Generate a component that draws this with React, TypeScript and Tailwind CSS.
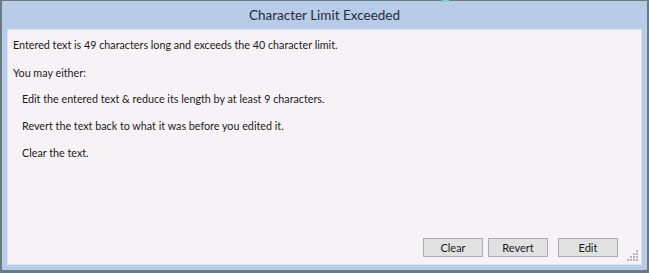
import React from 'react';

const font = { fontFamily: 'Lato, "Noto Sans", sans-serif' };

function ResizeGrip() {
  const dots: [number, number][] = [];
  for (let r = 0; r < 4; r++) {
    for (let c = 0; c < 4; c++) {
      if (r + c >= 3) dots.push([c * 3, r * 3]);
    }
  }
  return (
    <svg width="12" height="12" viewBox="0 0 12 12" className="absolute right-[2px] bottom-[2px]">
      {dots.map(([x, y], i) => (
        <rect key={i} x={x} y={y} width="2" height="2" fill="#b5b5b5" />
      ))}
    </svg>
  );
}

function Button({ label }: { label: string }) {
  return (
    <button className="h-[19px] w-[60px] border border-[#adadad] bg-[#e1e1e1] text-[11px] leading-none text-[#1b1b1b]">
      {label}
    </button>
  );
}

export default function App() {
  return (
    <div
      className="relative flex h-[273px] w-[649px] flex-col border-t border-l-2 border-r-2 border-b-[3px] border-[#6d7885] bg-[#b8cce8]"
      style={font}
    >
      <div className="absolute -top-px left-[440px] h-[2px] w-[7px] bg-[#7fd0dc]" />
      <div className="flex h-[28px] items-center justify-center text-[13.5px] text-[#1f2d3d]">
        Character Limit Exceeded
      </div>
      <div className="relative mx-[5px] mb-[5px] flex flex-1 flex-col border border-[#d9e2ee] bg-[#f7f2f6] px-[5px] pt-[7px] pb-[7px] text-[10.75px] leading-[15px] text-[#1a1a1a]">
        <p>Entered text is 49 characters long and exceeds the 40 character limit.</p>
        <p className="mt-[13px]">You may either:</p>
        <div className="flex flex-col gap-[12px] pl-[9px] pt-[11px]">
          <p>Edit the entered text &amp; reduce its length by at least 9 characters.</p>
          <p>Revert the text back to what it was before you edited it.</p>
          <p>Clear the text.</p>
        </div>
        <div className="flex-1" />
        <div className="flex justify-end pr-[18px]">
          <Button label="Clear" />
          <div className="w-[5px]" />
          <Button label="Revert" />
          <div className="w-[10px]" />
          <Button label="Edit" />
        </div>
        <ResizeGrip />
      </div>
    </div>
  );
}
